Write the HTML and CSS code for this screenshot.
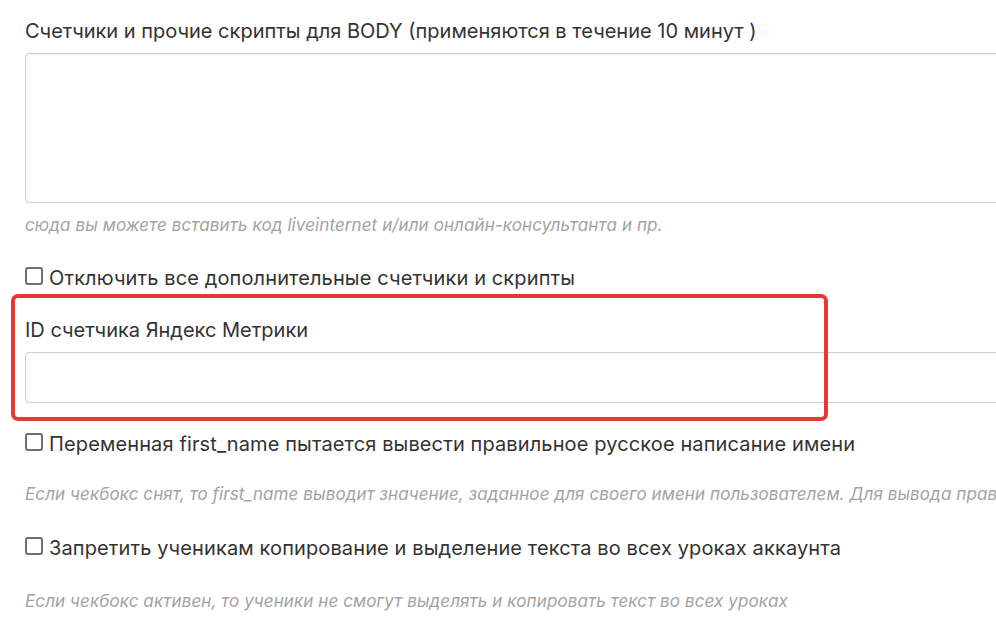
FILE: index.html
```html
<!DOCTYPE html>
<html lang="ru">
<head>
<meta charset="utf-8">
<title>Настройки</title>
<link rel="stylesheet" href="styles.css">
</head>
<body>
<div class="form">
  <div class="field">
    <label class="label">Счетчики и прочие скрипты для BODY (применяются в течение 10 минут )</label>
    <div class="textarea"></div>
    <div class="hint">сюда вы можете вставить код liveinternet и/или онлайн-консультанта и пр.</div>
  </div>
  <div class="check check-first"><span class="box"></span><span>Отключить все дополнительные счетчики и скрипты</span></div>
  <div class="field field-metrika">
    <label class="label">ID счетчика Яндекс Метрики</label>
    <div class="input"></div>
    <div class="highlight"></div>
  </div>
  <div class="check check-name"><span class="box"></span><span>Переменная first_name пытается вывести правильное русское написание имени</span></div>
  <div class="hint hint-name">Если чекбокс снят, то first_name выводит значение, заданное для своего имени пользователем. Для вывода правильного написания имени включите чекбокс</div>
  <div class="check check-copy"><span class="box"></span><span>Запретить ученикам копирование и выделение текста во всех уроках аккаунта</span></div>
  <div class="hint hint-copy">Если чекбокс активен, то ученики не смогут выделять и копировать текст во всех уроках</div>
</div>
</body>
</html>
```
FILE: styles.css
```css
html, body {
  margin: 0;
  padding: 0;
  background: #fff;
  overflow: hidden;
}
body {
  width: 996px;
  height: 622px;
  font-family: Inter, "Noto Sans", sans-serif;
  color: #333;
}
.form {
  width: 1200px;
  padding: 19px 0 0 25px;
  display: flex;
  flex-direction: column;
}
.field {
  display: flex;
  flex-direction: column;
}
.label {
  font-size: 20px;
  line-height: 24px;
  white-space: nowrap;
}
.textarea {
  margin-top: 10px;
  height: 148px;
  border: 1px solid #cfcfcf;
  border-radius: 4px;
  box-shadow: inset 0 1px 2px rgba(0,0,0,0.05);
}
.input {
  margin-top: 10px;
  height: 49px;
  border: 1px solid #cfcfcf;
  border-radius: 4px;
  box-shadow: inset 0 1px 2px rgba(0,0,0,0.05);
}
.hint {
  font-size: 17px;
  line-height: 22px;
  font-style: italic;
  color: #a3a3a3;
  letter-spacing: 0.1px;
  white-space: nowrap;
}
.field .hint {
  margin-top: 11px;
}
.check {
  display: flex;
  align-items: center;
  gap: 6px;
  font-size: 20px;
  line-height: 26px;
  letter-spacing: 0.12px;
  white-space: nowrap;
}
.box {
  width: 14px;
  height: 14px;
  border: 2px solid #707070;
  border-radius: 3px;
  flex: none;
  margin-top: -4px;
}
.check-first {
  margin-top: 29px;
}
.field-metrika {
  position: relative;
  margin-top: 27px;
}
.highlight {
  position: absolute;
  left: -14px;
  top: -24px;
  width: 809px;
  height: 119px;
  border: 4px solid #e53a33;
  border-radius: 7px;
}
.check-name {
  margin-top: 28px;
}
.hint-name {
  margin-top: 26px;
}
.check-copy {
  margin-top: 30px;
}
.hint-copy {
  margin-top: 29px;
}
```
